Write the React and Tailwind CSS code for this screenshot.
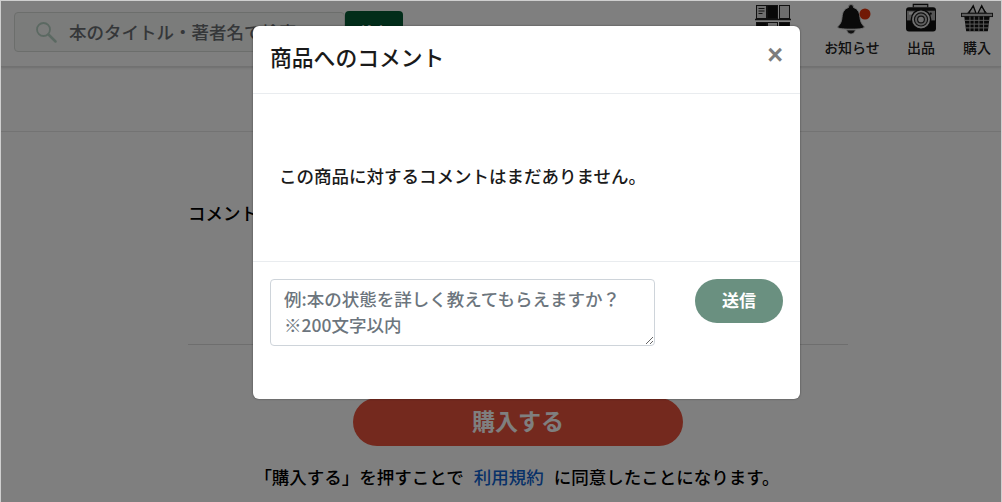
import React from "react";

function Shelf() {
  return (
    <svg width="36" height="40" viewBox="0 0 36 40" className="block">
      <g stroke="#222" strokeWidth="1">
        <rect x="1.500" y="2.500" width="10" height="13" fill="#ddd" />
        <path d="M3.500 5.500h6M3.500 8h6M3.500 10.500h4" fill="none" />
        <rect x="12.500" y="2.500" width="10" height="13" fill="#111" />
        <rect x="24.500" y="2.500" width="10" height="13" fill="#ddd" />
        <path d="M0 16.500h36" strokeWidth="1.500" fill="none" />
        <rect x="1.500" y="19.500" width="10" height="13" fill="#111" />
        <rect x="12.500" y="19.500" width="10" height="13" fill="#ddd" />
        <rect x="24.500" y="19.500" width="10" height="13" fill="#111" />
      </g>
    </svg>
  );
}

function Bell() {
  return (
    <svg width="36" height="32" viewBox="0 0 36 32" className="block">
      <path d="M15 1.500a2.600 2.600 0 0 1 2.500 3c4.500 1.500 6 5 6.500 10 .4 4 1.500 6.500 4.500 9.500-1 1.500-4 2.200-13.500 2.200S2 25.500 1.500 24c3-3 4.200-5.500 4.500-9.500.4-5 2-8.500 6.500-10A2.600 2.600 0 0 1 15 1.500z" fill="#151515" stroke="#ddd" strokeWidth="1" />
      <path d="M10.500 27h9l-1 2a4 4 0 0 1-7 0z" fill="#222" stroke="#ddd" strokeWidth="0.800" />
      <circle cx="29" cy="11" r="5.500" fill="#e3330a" />
    </svg>
  );
}

function Camera() {
  return (
    <svg width="32" height="29" viewBox="0 0 32 30" className="block">
      <path d="M8 4.500V1.500h15v3" fill="#ccc" stroke="#111" strokeWidth="1.200" />
      <rect x="0.500" y="4.500" width="31" height="25" rx="3" fill="#111" />
      <rect x="1.500" y="8" width="29" height="10" fill="#aaa" />
      <rect x="3.500" y="9.500" width="5" height="2.500" fill="#eee" />
      <circle cx="26" cy="11" r="1.200" fill="#111" />
      <circle cx="16" cy="17" r="10" fill="#ddd" stroke="#111" strokeWidth="1.500" />
      <circle cx="16" cy="17" r="6.800" fill="#bbb" stroke="#222" strokeWidth="1.200" />
      <circle cx="16" cy="17" r="3.500" fill="#ddd" stroke="#222" strokeWidth="1.200" />
    </svg>
  );
}

function Basket() {
  return (
    <svg width="32" height="30" viewBox="0 0 34 30" className="block">
      <path d="M8 10l5-8 3 8zM18 10l4-8 4 8z" fill="#ddd" stroke="#111" strokeWidth="1.400" />
      <path d="M13 3l-7 8M22 3l6 8" stroke="#111" strokeWidth="1" fill="none" />
      <rect x="0.500" y="10" width="33" height="3.500" fill="#bbb" stroke="#222" strokeWidth="1" />
      <path d="M3.500 13.500h27l-2 15.500h-23z" fill="#111" />
      <path d="M4 17.500h26M4.500 21.500h25M5 25.500h24M9.500 13.500v15.500M14 13.500v15.500M19 13.500v15.500M24 13.500v15.500" stroke="#bbb" strokeWidth="1" />
    </svg>
  );
}

function NavItem({ label, icon, width }) {
  return (
    <div className={`flex flex-col items-center ${width}`}>
      <div className="h-[34px] flex items-start">{icon}</div>
      <span className="text-[14px] leading-[20px] font-medium text-[#222]">{label}</span>
    </div>
  );
}

export default function App() {
  return (
    <div className="relative w-[1002px] h-[502px] overflow-hidden bg-white text-black font-['Noto_Sans_CJK_JP','Noto_Sans',sans-serif]">
      <header className="h-[67px] border-b border-[#e2e2e2] shadow-sm flex items-start pl-[14px]">
        <div className="flex items-start mt-[11px]">
          <div className="mt-px w-[331px] h-[40px] rounded border border-[#d8dcd8] bg-[#f6f8f6] flex items-center pl-[20px] gap-[12px]">
            <svg width="22" height="22" viewBox="0 0 22 22" fill="none" stroke="#b7d2c4" strokeWidth="2.500"><circle cx="8.500" cy="8.500" r="6.500" strokeWidth="1.800" /><path d="M13.500 13.500l7 7" strokeLinecap="round" /></svg>
            <span className="text-[17.500px] font-medium text-[#6a6e72] whitespace-nowrap">本のタイトル・著者名で検索</span>
          </div>
          <button className="w-[58px] h-[40px] rounded bg-[#045a34] text-white text-[14px] font-bold">検索</button>
        </div>
        <div className="ml-auto flex items-start pt-[3px]">
          <div className="w-[36px] mr-[31px]"><Shelf /></div>
          <div className="w-[60px] flex flex-col items-center">
            <div className="h-[34px] self-start pl-[14px]"><Bell /></div>
            <span className="text-[14px] leading-[20px] font-medium text-[#222]">お知らせ</span>
          </div>
          <div className="w-[10px]" />
          <NavItem label="出品" icon={<Camera />} width="w-[60px] pr-[2px]" />
          <NavItem label="購入" icon={<Basket />} width="w-[50px]" />
        </div>
      </header>

      <main className="relative">
        <div className="h-[65px] border-b border-[#e6e6e6]" />
        <div className="w-[660px] ml-[188px] h-[213px] border-b border-[#dcdcdc] pt-[69px]">
          <p className="text-[17.500px] leading-6 font-medium whitespace-nowrap">コメント</p>
        </div>
        <div className="flex flex-col items-center pl-[34px] pt-[53px]">
          <button className="w-[330px] h-[48px] rounded-full bg-[#e9523c] text-white text-[23px] leading-none font-bold pb-[4px]">購入する</button>
        </div>
        <p className="mt-[19px] text-center text-[17.500px] leading-6 font-medium pl-[32px] whitespace-nowrap">「購入する」を押すことで<a className="text-[#0f62d0] mx-[10px]">利用規約</a>に同意したことになります。</p>
      </main>

      <div className="absolute inset-0 bg-black/50" />
      <div className="absolute inset-0 border border-[#cfcfcf] border-b-0 pointer-events-none" />

      <section className="absolute left-[253px] top-[26px] w-[547px] h-[373px] rounded-md bg-white flex flex-col shadow-[0_0_2px_rgba(0,0,0,0.5)]">
        <div className="h-[68px] border-b border-[#e9ecef] flex items-start justify-between pl-[17px] pr-[17px]">
          <h2 className="text-[21.800px] leading-none font-medium text-[#1a1a1a] mt-[20px]">商品へのコメント</h2>
          <span className="text-[27px] leading-none font-bold text-[#7c7c7c] font-['Liberation_Sans',sans-serif] mt-[16px]">×</span>
        </div>
        <div className="h-[168px] pl-[26px] pt-[70px] border-b border-[#e9ecef]">
          <p className="text-[17.500px] leading-6 font-medium text-[#1a1a1a] whitespace-nowrap">この商品に対するコメントはまだありません。</p>
        </div>
        <div className="flex items-start pl-[17px] pt-[17px]">
          <textarea
            readOnly
            className="w-[385px] h-[67px] rounded border border-[#ced4da] px-[13px] py-[6px] text-[17.500px] leading-[26px] font-medium outline-none placeholder:text-[#6c757d] resize-y overflow-hidden"
            placeholder={"例:本の状態を詳しく教えてもらえますか？\n※200文字以内"}
          />
          <button className="ml-[40px] w-[88px] h-[44px] rounded-full bg-[#6a9080] text-white text-[17px] font-bold pb-[2px]">送信</button>
        </div>
      </section>
    </div>
  );
}
